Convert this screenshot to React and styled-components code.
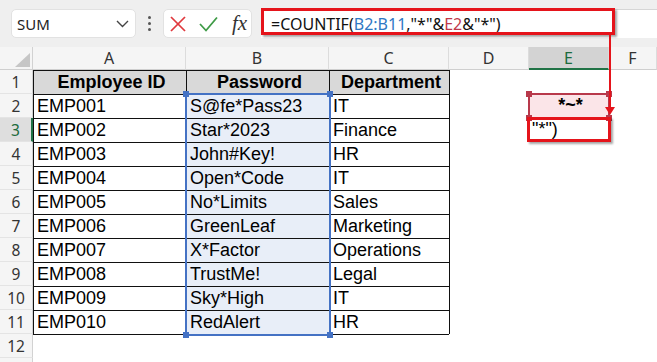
import React from 'react';
import styled, { createGlobalStyle } from 'styled-components';

const Global = createGlobalStyle`
  html, body { margin: 0; padding: 0; background: #fff; }
  body { width: 657px; height: 362px; overflow: hidden; font-family: "Liberation Sans", Arial, sans-serif; }
`;

const Page = styled.div`
  position: relative;
  width: 657px;
  height: 362px;
  overflow: hidden;
  background: #fff;
`;

const Toolbar = styled.div`
  display: flex;
  align-items: center;
  height: 47px;
  padding-left: 11px;
  box-sizing: border-box;
  background: #efefef;
`;

const NameBox = styled.div`
  width: 125px;
  height: 29px;
  box-sizing: border-box;
  background: #fff;
  border: 1px solid #e2e2e2;
  border-radius: 5px;
  display: flex;
  align-items: center;
  justify-content: space-between;
  padding: 0 6px 0 5px;
  font-family: "Noto Sans", sans-serif;
  font-size: 15px;
  color: #222;
`;

const Dots = styled.div`
  width: 27px;
  display: flex;
  flex-direction: column;
  align-items: center;
  gap: 3px;
  span { width: 3px; height: 3px; border-radius: 50%; background: #555; }
`;

const FxButtons = styled.div`
  width: 89px;
  height: 29px;
  box-sizing: border-box;
  background: #fff;
  border: 1px solid #e2e2e2;
  border-radius: 5px;
  display: flex;
  align-items: center;
  padding-left: 6px;
  gap: 13px;
`;

const FxLabel = styled.span`
  font-family: "Liberation Serif", "Times New Roman", serif;
  font-style: italic;
  font-size: 21px;
  color: #333;
  margin-left: 1px;
  line-height: 1;
`;

const FormulaBar = styled.div`
  flex: 1;
  margin-left: 9px;
  height: 29px;
  box-sizing: border-box;
  background: #fff;
  border-top: 1px solid #d6d6d6;
  display: flex;
  align-items: center;
  padding-left: 10px;
  font-family: "Noto Sans", sans-serif;
  font-size: 16px;
  color: #111;
  white-space: nowrap;
`;

const Ref = styled.span`
  color: ${p => p.$c};
`;

const Sheet = styled.div`
  display: grid;
  grid-template-columns: 33px 153px 143px 120px 80px 80px 48px;
  grid-template-rows: 23px repeat(13, 24px);
`;

const Corner = styled.div`
  position: relative;
  background: #f5f5f5;
  border-right: 1px solid #d2d2d2;
  border-bottom: 1px solid #cfcfcf;
  &::after {
    content: "";
    position: absolute;
    left: 15px;
    top: 6px;
    width: 15px;
    height: 14px;
    background: #c6c6c6;
    clip-path: polygon(100% 0, 100% 100%, 0 100%);
  }
`;

const ColHead = styled.div`
  box-sizing: border-box;
  background: ${p => (p.$active ? '#d3d3d3' : '#f5f5f5')};
  border-right: 1px solid #dcdcdc;
  border-bottom: ${p => (p.$active ? '2px solid #217346' : '1px solid #cfcfcf')};
  color: ${p => (p.$active ? '#1d6b3c' : '#333')};
  font-family: "Noto Sans", sans-serif;
  font-size: 16px;
  display: flex;
  align-items: center;
  justify-content: center;
`;

const RowHead = styled.div`
  box-sizing: border-box;
  background: ${p => (p.$active ? '#dedede' : '#f5f5f5')};
  border-right: ${p => (p.$active ? '2px solid #217346' : '1px solid #d2d2d2')};
  border-bottom: 1px solid #e4e4e4;
  color: ${p => (p.$active ? '#1d6b3c' : '#333')};
  font-family: "Noto Sans", sans-serif;
  font-size: 15.5px;
  display: flex;
  align-items: center;
  justify-content: center;
`;

const fills = { header: '#d9d9d9', range: '#e8eef8', ref: '#fbe5e8' };

const Cell = styled.div`
  box-sizing: border-box;
  background: ${p => fills[p.$fill] || '#fff'};
  border-left: ${p => (p.$bl ? '1px solid #111' : 'none')};
  border-top: ${p => (p.$bt ? '1px solid #111' : 'none')};
  padding-left: 3px;
  font-size: 18px;
  font-weight: ${p => (p.$bold ? 700 : 400)};
  text-align: ${p => (p.$center ? 'center' : 'left')};
  line-height: 23px;
  color: #000;
  white-space: nowrap;
  overflow: visible;
`;

const RangeBox = styled.div`
  position: absolute;
  left: ${p => p.$x}px;
  top: ${p => p.$y}px;
  width: ${p => p.$w}px;
  height: ${p => p.$h}px;
  box-sizing: border-box;
  border: 2px solid ${p => p.$c};
  pointer-events: none;
`;

const Handle = styled.span`
  position: absolute;
  width: 6px;
  height: 6px;
  background: ${p => p.$c};
  ${p => (p.$v === 't' ? 'top: -4px;' : 'bottom: -4px;')}
  ${p => (p.$h === 'l' ? 'left: -4px;' : 'right: -4px;')}
`;

const RedBox = styled.div`
  position: absolute;
  left: ${p => p.$x}px;
  top: ${p => p.$y}px;
  width: ${p => p.$w}px;
  height: ${p => p.$h}px;
  box-sizing: border-box;
  border: 3px solid #e5141b;
  box-shadow: 2px 2px 2px rgba(0, 0, 0, 0.35);
  pointer-events: none;
`;

const ArrowLine = styled.div`
  position: absolute;
  left: 609px;
  top: 35px;
  width: 2px;
  height: 74px;
  background: #e5141b;
  &::after {
    content: "";
    position: absolute;
    left: -4px;
    top: 72px;
    border-left: 5px solid transparent;
    border-right: 5px solid transparent;
    border-top: 8px solid #e5141b;
  }
`;

const rows = [
  ['EMP001', 'S@fe*Pass23', 'IT'],
  ['EMP002', 'Star*2023', 'Finance'],
  ['EMP003', 'John#Key!', 'HR'],
  ['EMP004', 'Open*Code', 'IT'],
  ['EMP005', 'No*Limits', 'Sales'],
  ['EMP006', 'GreenLeaf', 'Marketing'],
  ['EMP007', 'X*Factor', 'Operations'],
  ['EMP008', 'TrustMe!', 'Legal'],
  ['EMP009', 'Sky*High', 'IT'],
  ['EMP010', 'RedAlert', 'HR'],
];

const cols = ['A', 'B', 'C', 'D', 'E', 'F'];

function Corners({ c }) {
  return (
    <>
      <Handle $c={c} $v="t" $h="l" />
      <Handle $c={c} $v="t" $h="r" />
      <Handle $c={c} $v="b" $h="l" />
      <Handle $c={c} $v="b" $h="r" />
    </>
  );
}

export default function App() {
  const body = [];
  const allRows = [['Employee ID', 'Password', 'Department'], ...rows, null, null];
  allRows.forEach((r, i) => {
    const n = i + 1;
    body.push(
      <RowHead key={`h${n}`} $active={n === 3}>{n <= 12 ? n : ''}</RowHead>
    );
    for (let c = 0; c < 6; c++) {
      const inTable = r && c < 3;
      let text = inTable ? r[c] : '';
      let fill;
      if (n === 1 && c < 3) fill = 'header';
      else if (c === 1 && n >= 2 && n <= 11) fill = 'range';
      if (c === 4 && n === 2) { fill = 'ref'; text = '*~*'; }
      if (c === 4 && n === 3) text = '"*")';
      body.push(
        <Cell
          key={`c${n}-${c}`}
          $fill={fill}
          $bl={(inTable || (c === 3 && r !== null)) && n <= 11}
          $bt={c < 3 && n <= 12}
          $bold={n === 1 || (c === 4 && n === 2)}
          $center={n === 1 || (c === 4 && n === 2)}
        >
          {text}
        </Cell>
      );
    }
  });

  return (
    <Page>
      <Global />
      <Toolbar>
        <NameBox>
          <span>SUM</span>
          <svg width="13" height="8" viewBox="0 0 13 8">
            <polyline points="1,1 6.5,6.5 12,1" fill="none" stroke="#444" strokeWidth="1.4" />
          </svg>
        </NameBox>
        <Dots><span /><span /><span /></Dots>
        <FxButtons>
          <svg width="16" height="16" viewBox="0 0 16 16">
            <line x1="1" y1="1" x2="15" y2="15" stroke="#e0393e" strokeWidth="1.7" />
            <line x1="15" y1="1" x2="1" y2="15" stroke="#e0393e" strokeWidth="1.7" />
          </svg>
          <svg width="19" height="16" viewBox="0 0 19 16">
            <polyline points="1,8 7,14.5 18,1.5" fill="none" stroke="#3f9b47" strokeWidth="1.8" />
          </svg>
          <FxLabel>fx</FxLabel>
        </FxButtons>
        <FormulaBar>
          =COUNTIF(<Ref $c="#2f78c4">B2:B11</Ref>,"*"&amp;<Ref $c="#c0394a">E2</Ref>&amp;"*")
        </FormulaBar>
      </Toolbar>
      <Sheet>
        <Corner />
        {cols.map((c, i) => (
          <ColHead key={c} $active={i === 4}>{c}</ColHead>
        ))}
        {body}
      </Sheet>
      <RangeBox $x={185} $y={93} $w={146} $h={243} $c="#4472c4">
        <Corners c="#4472c4" />
      </RangeBox>
      <RangeBox $x={528} $y={93} $w={82} $h={26} $c="#b8394b">
        <Corners c="#b8394b" />
      </RangeBox>
      <RedBox $x={261} $y={8} $w={354} $h={27} />
      <ArrowLine />
      <RedBox $x={527} $y={117} $w={84} $h={25} />
    </Page>
  );
}
